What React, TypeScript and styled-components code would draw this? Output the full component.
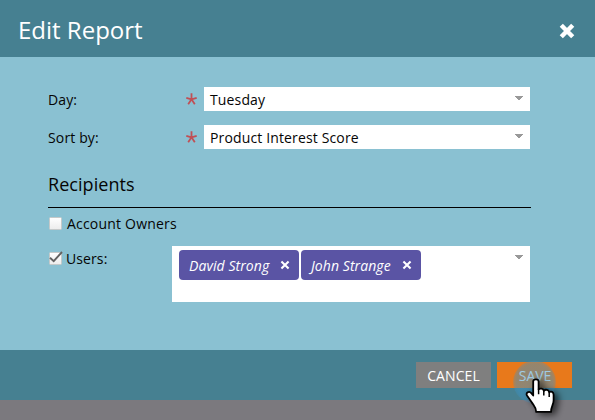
import React from "react";
import styled, { createGlobalStyle } from "styled-components";

const GlobalStyle = createGlobalStyle`
  * { box-sizing: border-box; }
  body {
    margin: 0;
    overflow: hidden;
    background: #7b797e;
    font-family: "Open Sans", "Noto Sans", sans-serif;
    font-size: 14px;
    color: #050505;
  }
`;

const Page = styled.div`
  width: 595px;
  height: 420px;
  position: relative;
  overflow: hidden;
  background: #7b797e;
`;

const Header = styled.header`
  height: 57px;
  padding: 3px 20px 0 18px;
  display: flex;
  align-items: flex-start;
  justify-content: space-between;
  background: #468091;
  > button { margin-top: 20px; }
`;

const Title = styled.h1`
  margin: 11px 0 0;
  font-size: 24px;
  line-height: 32px;
  font-weight: 400;
  color: #fff;
`;

const IconButton = styled.button<{ $size: number }>`
  width: ${(p) => p.$size}px;
  height: ${(p) => p.$size}px;
  padding: 0;
  border: 0;
  background: none;
  display: block;
  svg { display: block; }
`;

const Body = styled.main`
  height: 293px;
  padding: 30px 64px 0 48px;
  background: #8ac1d2;
`;

const Field = styled.div`
  width: 482px;
  height: 24px;
  margin-bottom: 14px;
  display: grid;
  grid-template-columns: 138px 18px 326px;
  grid-template-rows: 24px;
  align-items: start;
  letter-spacing: 0.14px;
  > svg { margin-top: 6px; }
`;

const Label = styled.label`
  line-height: 24px;
  padding-top: 1px;
  white-space: nowrap;
`;

const Select = styled.div`
  height: 24px;
  padding: 1px 7px 0 6px;
  display: flex;
  justify-content: space-between;
  line-height: 24px;
  background: #fff;
  > svg { margin-top: 8px; }
`;

const SectionTitle = styled.h2`
  width: 483px;
  height: 45px;
  margin: 0;
  padding-top: 9px;
  border-bottom: 1px solid #000;
  font-size: 18px;
  line-height: 24px;
  font-weight: 400;
  letter-spacing: 0.05px;
`;

const CheckRow = styled.div`
  height: 24px;
  margin-top: 3px;
  display: flex;
  align-items: center;
  gap: 4px;
  letter-spacing: 0.2px;
`;

const UsersRow = styled.div`
  width: 482px;
  margin-top: 11px;
  display: grid;
  grid-template-columns: 124px 358px;
`;

const UsersLabel = styled.div`
  height: 25px;
  display: flex;
  align-items: center;
  gap: 3px;
  letter-spacing: 0.1px;
`;

const TokenField = styled.div`
  height: 56px;
  padding: 4px 7px;
  display: flex;
  align-items: flex-start;
  gap: 2px;
  background: #fff;
  > svg { margin: 5px 0 0 auto; }
`;

const Token = styled.div`
  width: 120px;
  height: 30px;
  padding: 0 9px 0 10px;
  display: flex;
  align-items: center;
  justify-content: space-between;
  border-radius: 4px;
  background: #5a54a4;
  color: #fff;
  font-style: italic;
  letter-spacing: 0.07px;
  white-space: nowrap;
`;

const TokenName = styled.span`
  height: 30px;
  padding-top: 1px;
  line-height: 30px;
`;

const Footer = styled.footer`
  height: 50px;
  padding: 12px 23px 0 0;
  display: flex;
  justify-content: flex-end;
  gap: 6px;
  background: #468091;
`;

const Button = styled.button<{ $primary?: boolean }>`
  width: 75px;
  height: 26px;
  padding: 2px 0 0 ${(p) => (p.$primary ? "1px" : "0")};
  border: 0;
  font: 14px/24px "Open Sans", sans-serif;
  letter-spacing: ${(p) => (p.$primary ? "-0.1px" : "0.1px")};
  color: #fff;
  background: ${(p) => (p.$primary ? "#e8791b" : "#7f7f7f")};
`;

const Pointer = styled.svg`
  position: absolute;
  left: 505px;
  top: 352px;
  pointer-events: none;
`;

const Cross = ({ size, weight }: { size: number; weight: number }) => (
  <svg width={size} height={size} viewBox="0 0 14 14">
    <path d="M2 2 12 12M12 2 2 12" stroke="#fff" strokeWidth={weight} />
  </svg>
);

const Required = () => (
  <svg width="11" height="12" viewBox="0 0 11 12">
    <path d="M5.5 6.3V.3M5.5 6.3 .3 4.8M5.5 6.3 10.7 4.8M5.5 6.3 2.2 11.2M5.5 6.3 8.8 11.2" stroke="#c04f55" strokeWidth="1.8" />
  </svg>
);

const Arrow = () => (
  <svg width="8" height="4" viewBox="0 0 8 4" shapeRendering="crispEdges">
    <path d="M0 0H8V1H7V2H6V3H5V4H3V3H2V2H1V1H0Z" fill="#999" />
  </svg>
);

const Checkbox = ({ checked = false }: { checked?: boolean }) => (
  <svg width="15" height="15" viewBox="0 0 15 15">
    <defs>
      <linearGradient id="box" x2="0" y2="1">
        <stop stopColor="#fff" />
        <stop offset="1" stopColor="#ececec" />
      </linearGradient>
    </defs>
    <rect x="1.5" y="1.5" width="12" height="12" rx="1" fill="url(#box)" stroke="#c5c9c9" />
    {checked && <path d="M2 6.8 5.7 10.2 14 1" fill="none" stroke="#626262" strokeWidth="1.9" />}
  </svg>
);

const HandPointer = () => (
  <Pointer width="70" height="68" viewBox="0 0 70 68">
    <defs>
      <filter id="shadow" x="-40%" y="-40%" width="190%" height="190%">
        <feDropShadow dx="4" dy="2" stdDeviation="3.5" floodColor="#000" floodOpacity=".65" />
      </filter>
      <radialGradient id="halo">
        <stop offset="0" stopColor="#3b93c7" stopOpacity=".52" />
        <stop offset=".85" stopColor="#3b93c7" stopOpacity=".48" />
        <stop offset="1" stopColor="#3b93c7" stopOpacity=".3" />
      </radialGradient>
    </defs>
    <circle cx="29.5" cy="30" r="21.3" fill="url(#halo)" />
    <path
      filter="url(#shadow)"
      d="M28.2 43.5V29.5C28.2 26.7 33.6 26.7 33.6 29.5V37.5C34.8 36 38.4 36.3 38.8 38.8C40.4 37 43.8 37.7 44.2 40.2C46 38.9 48.6 39.8 48.6 42.8V48.5C48.6 52.5 46 54.5 46 59.9H31.2C31.2 55.5 29 54 26.7 50.3L22 43.6C20.3 40.9 24 38.5 26.3 41.2Z"
      fill="#fff"
      stroke="#000"
      strokeWidth="1.8"
      strokeLinejoin="round"
    />
    <path d="M33.6 36.8V42.3M38.8 38.5V43.5M44.2 40V45" stroke="#000" strokeWidth="1.5" />
  </Pointer>
);

const fields = [
  { label: "Day:", value: "Tuesday" },
  { label: "Sort by:", value: "Product Interest Score" },
];

export default function App() {
  return (
    <>
      <GlobalStyle />
      <Page>
        <Header>
          <Title>Edit Report</Title>
          <IconButton $size={16} aria-label="Close">
            <Cross size={16} weight={3.9} />
          </IconButton>
        </Header>
        <Body>
          {fields.map((f) => (
            <Field key={f.label}>
              <Label>{f.label}</Label>
              <Required />
              <Select>
                {f.value}
                <Arrow />
              </Select>
            </Field>
          ))}
          <SectionTitle>Recipients</SectionTitle>
          <CheckRow>
            <Checkbox />
            <span>Account Owners</span>
          </CheckRow>
          <UsersRow>
            <UsersLabel>
              <Checkbox checked />
              <span>Users:</span>
            </UsersLabel>
            <TokenField>
              {["David Strong", "John Strange"].map((name) => (
                <Token key={name}>
                  <TokenName>{name}</TokenName>
                  <IconButton $size={10} aria-label={"Remove " + name}>
                    <Cross size={10} weight={2.9} />
                  </IconButton>
                </Token>
              ))}
              <Arrow />
            </TokenField>
          </UsersRow>
        </Body>
        <Footer>
          <Button>CANCEL</Button>
          <Button $primary>SAVE</Button>
        </Footer>
        <HandPointer />
      </Page>
    </>
  );
}
